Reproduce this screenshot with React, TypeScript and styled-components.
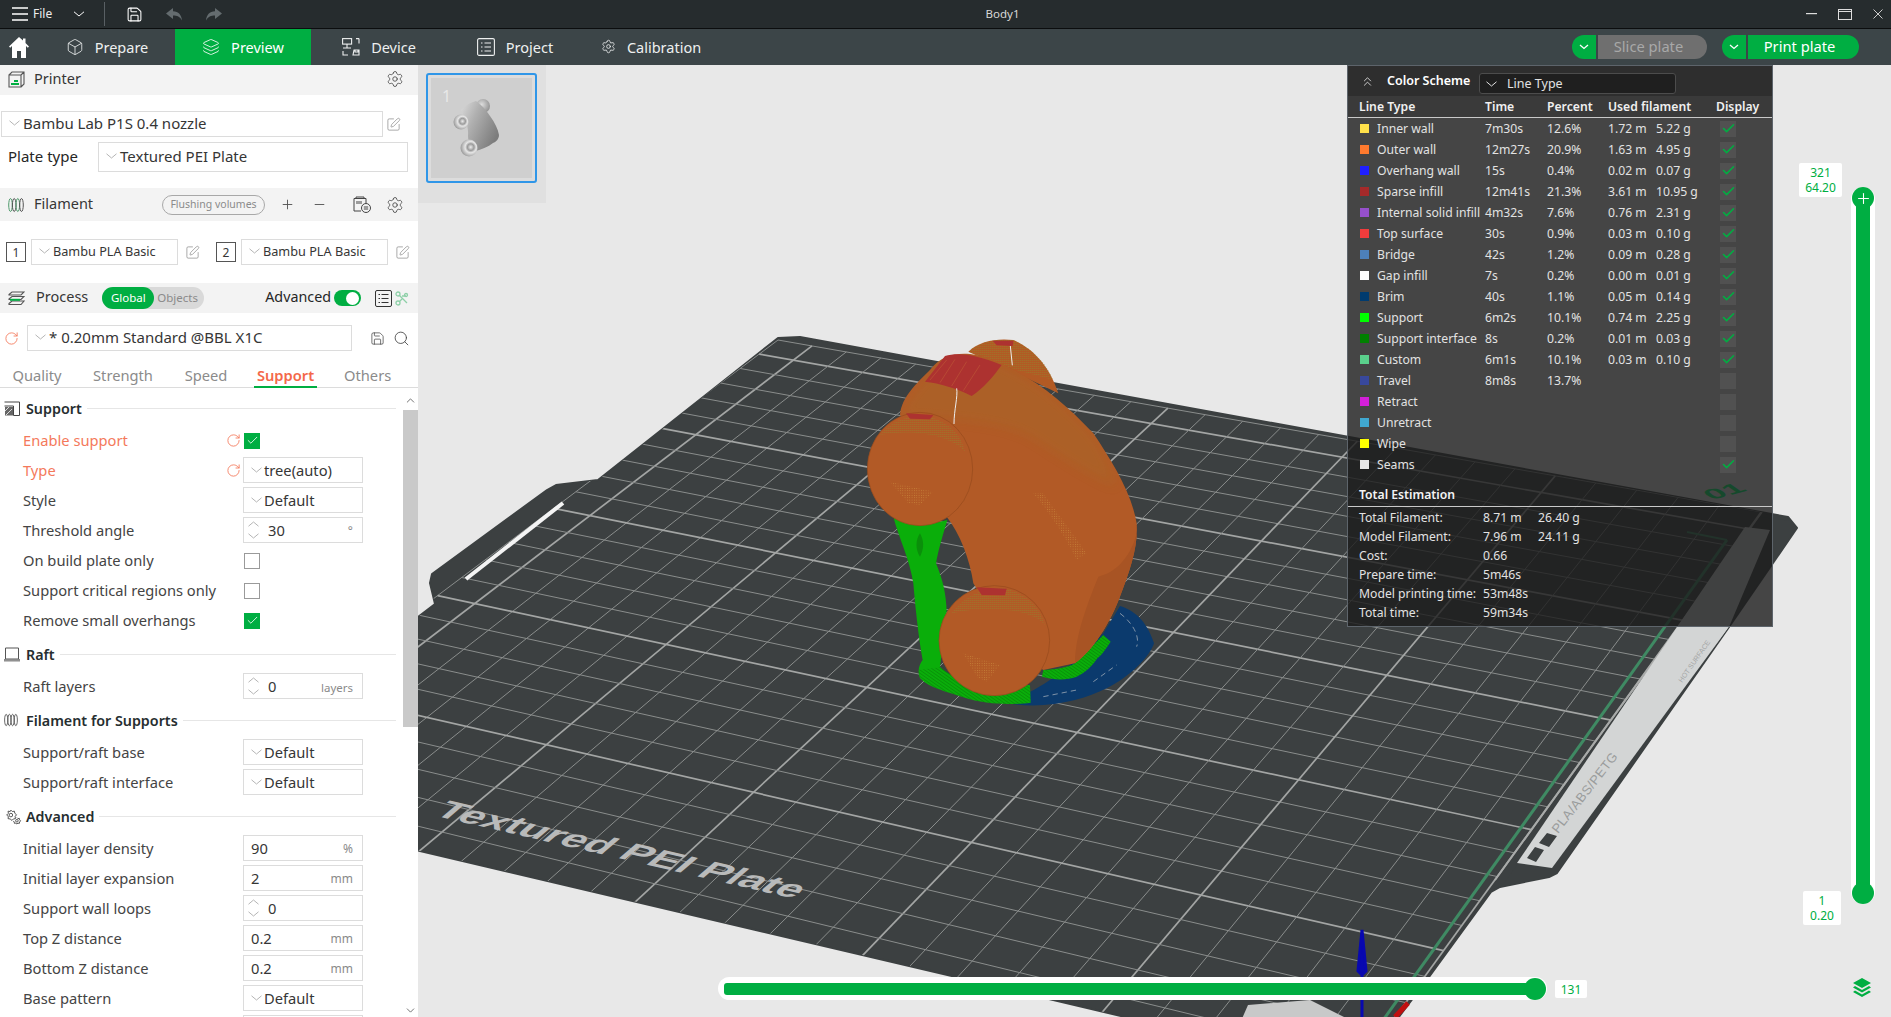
import React from "react";
import styled, { createGlobalStyle } from "styled-components";
import { Box, Layers, Settings, Plus, Minus, Search, Save, RotateCw, SquarePen, Check, ChevronsUp, ChevronUp, ChevronDown } from "lucide-react";

const GREEN = "#00ae42";
const FONT = `"Noto Sans", "Open Sans", Arial, sans-serif`;

const GlobalStyle = createGlobalStyle`
  html, body { margin: 0; padding: 0; width: 100%; height: 100%; overflow: hidden; background: #e8e8e8; }
  #root { width: 1891px; height: 1017px; }
  * { box-sizing: border-box; }
`;

const Shell = styled.div`
  width: 1891px; height: 1017px; display: flex; flex-direction: column; overflow: hidden;
  font-family: ${FONT}; color: #363636; font-size: 14px;
`;

/* ---------- title bar ---------- */
const TitleBar = styled.header`
  height: 29px; flex: none; background: #262c2e; border-bottom: 1px solid #0b0d0e;
  display: grid; grid-template-columns: 1fr auto 1fr; align-items: center; color: #fff;
`;
const TitleLeft = styled.div`display: flex; align-items: center; padding-left: 12px; height: 100%;`;
const FileLabel = styled.span`font-size: 12px; margin-left: 5px; width: 40px; color: #eee; padding-bottom: 1px;`;
const TitleDivider = styled.span`width: 1px; height: 24px; background: #596064; margin: 0 21px 0 19px;`;
const DocTitle = styled.div`font-size: 11.5px; color: #d8d8d8; padding-left: 114px; padding-bottom: 2px;`;
const WinControls = styled.div`display: flex; justify-content: flex-end; align-items: center; gap: 21px; padding-right: 8px;`;
const IconSlot = styled.span<{ $gap?: number }>`display: inline-flex; margin-right: ${p => p.$gap ?? 0}px;`;
const Spacer = styled.span<{ $w: number }>`width: ${p => p.$w}px; flex: none;`;

/* ---------- nav bar ---------- */
const NavBar = styled.nav`height: 36px; flex: none; background: #3c4548; display: flex; align-items: center; color: #eef0f0;`;
const HomeSlot = styled.div`width: 39px; display: flex; padding-left: 9px;`;
const NavTab = styled.div<{ $active?: boolean }>`
  width: 136px; height: 100%; display: flex; align-items: center; justify-content: center; gap: 11px; padding-bottom: 1px;
  font-size: 14.5px; background: ${p => (p.$active ? GREEN : "transparent")}; color: ${p => (p.$active ? "#fff" : "#eef0f0")};
`;
const NavActions = styled.div`margin-left: auto; display: flex; align-items: center; padding-right: 32px;`;
const SplitCaret = styled.span`
  width: 24px; height: 24px; background: ${GREEN}; border-radius: 12px 0 0 12px; display: flex; align-items: center; justify-content: center; margin-right: 2px;
`;
const SplitBtn = styled.span<{ $w: number; $off?: boolean; $gap?: number }>`
  width: ${p => p.$w}px; height: 24px; border-radius: 0 12px 12px 0; display: flex; align-items: center; justify-content: center; padding: 0 8px 2px 0;
  font-size: 14.7px; background: ${p => (p.$off ? "#6f6f6f" : GREEN)}; color: ${p => (p.$off ? "#a8a8a8" : "#fff")};
  margin-right: ${p => p.$gap ?? 0}px;
`;

/* ---------- sidebar ---------- */
const Main = styled.div`flex: 1; display: flex; min-height: 0;`;
const Sidebar = styled.aside`width: 418px; flex: none; background: #fff; display: flex; flex-direction: column; overflow: hidden;`;
const PanelHeader = styled.div<{ $h: number; $pr?: number; $pb?: number }>`
  height: ${p => p.$h}px; flex: none; background: #f3f3f3; display: flex; align-items: center; padding: 0 ${p => p.$pr ?? 14}px ${p => p.$pb ?? 0}px 8px;
`;
const HeaderTitle = styled.span<{ $ml?: number; $pb?: number }>`font-size: 14.5px; color: #363636; margin-left: ${p => p.$ml ?? 9}px; padding-bottom: ${p => p.$pb ?? 3}px;`;
const HeaderRight = styled.div`margin-left: auto; display: flex; align-items: center;`;
const PrinterBody = styled.div`padding: 16px 10px 16px 1px; display: flex; flex-direction: column; gap: 5px;`;
const ComboLine = styled.div`display: flex; align-items: center; gap: 3px;`;
const Field = styled.div<{ $w?: number; $h?: number; $size?: number }>`
  width: ${p => (p.$w ? `${p.$w}px` : "auto")}; height: ${p => p.$h ?? 26}px; border: 1px solid #dcdcdc; background: #fff;
  display: flex; align-items: center; padding: 0 0 2px 7px; gap: 3px; font-size: ${p => p.$size ?? 15}px; color: #363636; flex: none; white-space: nowrap;
`;
const PlateLine = styled.div`display: flex; align-items: center; padding-left: 7px;`;
const PlateLabel = styled.span`width: 90px; font-size: 15px; color: #262626; padding-bottom: 3px;`;
const FilamentBody = styled.div`padding: 18px 0 18px 6px; display: flex; align-items: center;`;
const NumBox = styled.span`
  width: 20px; height: 20px; border: 1px solid #555; font-size: 12px; display: flex; align-items: center; justify-content: center; margin-right: 5px; flex: none;
`;
const Pill = styled.span`
  width: 103px; height: 20px; border: 1px solid #a8a8a8; border-radius: 10px; color: #8b8b8b; font-size: 10.5px; padding-bottom: 1px;
  display: flex; align-items: center; justify-content: center; margin-right: 15px;
`;
const Segment = styled.div`width: 102px; height: 22px; background: #d9d9d9; border-radius: 11px; display: flex; align-items: center; font-size: 11.5px; color: #8a8a8a; margin-left: 14px; margin-top: -1px;`;
const SegmentOn = styled.span`width: 52px; height: 22px; background: ${GREEN}; border-radius: 11px; color: #fff; display: flex; align-items: center; justify-content: center; margin-right: 3px;`;
const AdvancedLabel = styled.span`font-size: 14.3px; margin-right: 3px; color: #262626; padding-bottom: 3px;`;
const Toggle = styled.span`width: 27px; height: 16px; border-radius: 8px; background: ${GREEN}; display: flex; justify-content: flex-end; align-items: center; padding-right: 2px; margin-right: 14px;`;
const ToggleKnob = styled.span`width: 13px; height: 13px; border-radius: 50%; background: #fff;`;
const PresetLine = styled.div`padding: 12px 0 0 4px; display: flex; align-items: center; flex: none;`;
const TabsRow = styled.div`
  height: 37px; flex: none; border-bottom: 1px solid #dcdcdc; position: relative; display: flex; align-items: center; font-size: 14.7px; color: #8b8b8b;
`;
const SubTab = styled.span<{ $active?: boolean; $w: number; $ml?: number }>`
  width: ${p => p.$w}px; margin-left: ${p => p.$ml ?? 0}px; text-align: center; height: 100%; line-height: 48px; flex: none; position: relative;
  color: ${p => (p.$active ? "#f4684a" : "#8b8b8b")}; font-weight: ${p => (p.$active ? 600 : 400)};
  ${p => p.$active && `&::after { content: ""; position: absolute; left: 0; right: 0; bottom: -1px; height: 2px; background: ${GREEN}; }`}
`;
const SettingsArea = styled.div`flex: 1; display: flex; min-height: 0;`;
const SettingsList = styled.div`width: 402px; flex: none; padding-top: 1px; overflow: hidden;`;
const Scrollbar = styled.div`width: 16px; flex: none; padding-top: 6px; display: flex; flex-direction: column; align-items: center; background: #fff; color: #555; position: relative;`;
const ScrollThumb = styled.div`width: 15px; height: 317px; background: #c9c9c9; margin-top: 3px;`;
const ScrollEnd = styled.span`position: absolute; bottom: 0; line-height: 0;`;
const SectionHead = styled.div`height: 30px; margin: 4px 0 2px; display: flex; align-items: center; padding: 0 6px 0 4px;`;
const SectionIcon = styled.span`width: 22px; display: flex; flex: none;`;
const SectionTitle = styled.span`font-size: 14.3px; font-weight: 600; color: #262e30; white-space: nowrap; margin-right: 5px;`;
const SectionRule = styled.span`flex: 1; height: 1px; background: #e6e6e6;`;
const Row = styled.div`height: 30px; display: grid; grid-template-columns: 203px 17px 120px; padding-left: 23px; align-items: center;`;
const RowLabel = styled.span<{ $mod?: boolean }>`font-size: 14.7px; color: ${p => (p.$mod ? "#f4795b" : "#444")}; white-space: nowrap;`;
const ResetSlot = styled.span`display: flex;`;
const Control = styled.div`
  grid-column: 3; width: 120px; height: 26px; border: 1px solid #dcdcdc; display: flex; align-items: center; font-size: 14.7px; color: #363636; position: relative; padding-left: 7px;
`;
const ControlCombo = styled(Control)`gap: 2px;`;
const Spin = styled.span`display: flex; flex-direction: column; align-items: center; gap: 6px; width: 12px; margin: 0 9px 0 -4px;`;
const Unit = styled.span<{ $size?: number }>`position: absolute; right: 9px; bottom: 3px; font-size: ${p => p.$size ?? 11.5}px; color: #8a8a8a;`;
const Tick = styled.span<{ $on?: boolean }>`
  grid-column: 3; width: 16px; height: 16px; margin: 1px 0 0 1px; display: flex; align-items: center; justify-content: center;
  background: ${p => (p.$on ? GREEN : "#fff")}; border: 1px solid ${p => (p.$on ? GREEN : "#9a9a9a")};
`;

/* ---------- viewport overlays ---------- */
const Viewport = styled.main`flex: 1; position: relative; background: #e8e8e8; overflow: hidden;`;
const Canvas = styled.svg`position: absolute; left: 0; top: 0; width: 1473px; height: 952px;`;
const ThumbRail = styled.div`position: absolute; left: 0; top: 0; width: 128px; height: 138px; background: #e0e0e0; padding: 8px;`;
const ThumbCard = styled.div`width: 111px; height: 110px; border: 2px solid #2f96e8; border-radius: 3px; background: #cfcfcf; box-shadow: inset 0 0 0 3px #dcdcdc; line-height: 0;`;

const Legend = styled.section`
  position: absolute; left: 929px; top: 0; width: 426px; height: 562px; background: rgba(27, 27, 27, 0.8); border: 1px solid #5d646b; color: #e2e2e2; font-size: 12.2px;
`;
const LegendTop = styled.div`height: 30px; background: #2e2e2e; display: flex; align-items: center; padding-left: 12px; color: #fff;`;
const LegendTitle = styled.span`font-weight: 600; font-size: 12.5px; margin-left: 12px; width: 92px; padding-bottom: 1px;`;
const LegendCombo = styled.div`
  width: 197px; height: 21px; background: #1f1f1f; border: 1px solid #4c4c4c; border-radius: 3px; margin-top: 5px; display: flex; align-items: center; gap: 10px; padding-left: 6px; color: #e2e2e2; font-size: 12.5px;
`;
const LegendHead = styled.div`
  height: 21px; display: grid; grid-template-columns: 126px 62px 61px 108px 60px; padding-left: 11px; align-items: center; font-weight: 600; color: #f0f0f0; background: #3a3a3a;
`;
const Rule = styled.div<{ $mb?: number }>`height: 1px; background: #c9c9c9; margin-bottom: ${p => p.$mb ?? 0}px;`;
const LegendRow = styled.div`
  height: 21px; display: grid; grid-template-columns: 17px 108px 62px 61px 48px 64px 16px; padding-left: 12px; align-items: center; white-space: nowrap;
`;
const Swatch = styled.span<{ $c: string }>`width: 9px; height: 9px; background: ${p => p.$c};`;
const LegendCheck = styled.span`width: 16px; height: 16px; background: #515151; display: flex; align-items: center; justify-content: center; grid-column: 7;`;
const EstimateTitle = styled.div`height: 31px; padding: 11px 0 0 11px; font-weight: 600; color: #f4f4f4;`;
const EstimateRow = styled.div`height: 19px; display: grid; grid-template-columns: 124px 55px 1fr; padding-left: 11px; align-items: center; white-space: nowrap;`;

const Track = styled.div`position: absolute; background: #fff;`;
const VOuter = styled(Track)`left: 1433px; top: 122px; width: 24px; height: 717px; border-radius: 12px;`;
const VInner = styled.div`position: absolute; left: 5px; top: 10px; width: 14px; bottom: 10px; background: ${GREEN};`;
const Knob = styled.span<{ $pos: string }>`position: absolute; ${p => p.$pos}; width: 22px; height: 22px; border-radius: 50%; background: ${GREEN}; display: flex; align-items: center; justify-content: center;`;
const HOuter = styled(Track)`left: 300px; top: 912px; height: 23px; border-radius: 12px; width: 829px;`;
const HInner = styled.div`position: absolute; left: 6px; right: 12px; top: 6px; height: 12px; background: ${GREEN}; border-radius: 3px;`;
const Bubble = styled.div<{ $x: number; $y: number; $w: number; $h: number }>`
  position: absolute; left: ${p => p.$x}px; top: ${p => p.$y}px; width: ${p => p.$w}px; height: ${p => p.$h}px; background: #fff; color: ${GREEN}; font-size: 12px; line-height: 15px;
  display: flex; flex-direction: column; align-items: center; justify-content: center; border-radius: 2px;
`;
const LayerBtn = styled.span`position: absolute; left: 1435px; top: 913px; line-height: 0;`;

/* ---------- small drawings ---------- */
const Caret = ({ c = "#b5b5b5", w = 11 }: { c?: string; w?: number }) => (
  <svg width={w} height={6} viewBox="0 0 11 6" style={{ flex: "none" }}><path d="M.5.8 5.5 5 10.500.8" fill="none" stroke={c} strokeWidth="1" /></svg>
);
const CaretUp = () => (
  <svg width={11} height={6} viewBox="0 0 11 6" style={{ flex: "none" }}><path d="M.5 5.200 5.500 1 10.500 5.200" fill="none" stroke="#b5b5b5" strokeWidth="1" /></svg>
);
const Menu = () => <svg width="16" height="14" viewBox="0 0 16 14"><path d="M0 1h16M0 7h16M0 13h16" stroke="#fff" strokeWidth="1.4" /></svg>;
const Undo = ({ flip }: { flip?: boolean }) => (
  <svg width="17" height="13" viewBox="0 0 17 13" style={{ transform: flip ? "scaleX(-1)" : undefined }}>
    <path d="M7 0 0 5.500 7 11V7.500c4 0 7 1.200 9 5C15.500 7 12.500 3.500 7 3.300Z" fill="#646c6f" />
  </svg>
);
const Home = () => (
  <svg width="20" height="21" viewBox="0 0 20 21"><path d="M10 0 0 9.500l1.200 1.200L3 9v12h5v-7h4v7h5V9l1.800 1.700L20 9.500 16.500 6V1.500h-2.500v2Z" fill="#fff" /></svg>
);
const DeviceIcon = () => (
  <svg width="18" height="18" viewBox="0 0 18 18" fill="none" stroke="#eef0f0" strokeWidth="1.100">
    <rect x=".6" y=".6" width="9" height="5.500" /><path d="M5 6v4M1 10h8M1 13v4h5M17 .6h-3M17 .6v5M11 17h6v-5h-5zM13 12v2h3v-2" />
  </svg>
);
const ProjectIcon = () => (
  <svg width="18" height="18" viewBox="0 0 18 18" fill="none" stroke="#eef0f0" strokeWidth="1.100">
    <rect x=".6" y=".6" width="16.800" height="16.800" rx="1.500" /><path d="M4 5h1.500M7.500 5H14M4 9h1.500M7.500 9H14M4 13h1.500M7.500 13H14" />
  </svg>
);
const PrinterIcon = () => (
  <svg width="17" height="17" viewBox="0 0 17 17" fill="none" stroke="#555" strokeWidth="1.100">
    <path d="M1 4h12v12H1zM1 4l3-3h12v12l-3 3M13 4l3-3" /><path d="M3 12h8v2H3zM6 9h4v2H6z" fill={GREEN} stroke="none" />
  </svg>
);
const SpoolIcon = ({ c = "#4f9a6c", s = 16 }: { c?: string; s?: number }) => (
  <svg width={s} height={s} viewBox="0 0 16 16" fill="none" stroke={c} strokeWidth="1">
    <ellipse cx="2.500" cy="8" rx="1.800" ry="6.500" /><ellipse cx="6.200" cy="8" rx="1.800" ry="6.500" stroke="#555" /><ellipse cx="9.800" cy="8" rx="1.800" ry="6.500" /><ellipse cx="13.500" cy="8" rx="1.800" ry="6.500" stroke="#555" />
  </svg>
);
const ProcessIcon = () => (
  <svg width="17" height="15" viewBox="0 0 17 15" fill="none" stroke="#555" strokeWidth="1.100">
    <path d="M1 3.500 4 1h12l-3 3H1zM1 8l3-2.500h12l-3 3H1zM1 12.500 4 10h12l-3 3.500H1z" /><path d="M2 8.800h10" stroke={GREEN} strokeWidth="2" />
  </svg>
);
const ListIcon = () => (
  <svg width="17" height="17" viewBox="0 0 17 17" fill="none" stroke="#333" strokeWidth="1"><rect x=".5" y=".5" width="16" height="16" rx="1.500" /><path d="M3.500 4.500h1.500M6.500 4.500h7M3.500 8.500h1.500M6.500 8.500h7M3.500 12.500h1.500M6.500 12.500h7" /></svg>
);
const ScissorIcon = () => (
  <svg width="14" height="15" viewBox="0 0 14 15" fill="none" stroke="#8ed0a8" strokeWidth="1.300"><circle cx="3" cy="3" r="2" /><circle cx="3" cy="12" r="2" /><circle cx="11" cy="4" r="1.500" /><path d="M4.500 4.500 12 12M4.500 10.500 7 8M7 5h4" /></svg>
);
const FilamentTool = () => (
  <svg width="18" height="17" viewBox="0 0 18 17" fill="none" stroke="#444" strokeWidth="1"><path d="M1 15V2.500h12V7" /><path d="M1 2.500h12M3 1h8v1.500H3zM4 5v3M6 5v3M8 5v3" /><path d="M1 15h7" /><circle cx="13" cy="12" r="4.500" /><path d="M10.800 11h4.400M10.800 13h4.400" /></svg>
);
const SupportIcon = () => (
  <svg width="16" height="15" viewBox="0 0 16 15" fill="none" stroke="#444" strokeWidth="1"><path d="M.5 1h15v13.500h-6V5H.5" /><path d="M1 6h8v8.500H1z" fill="#666" stroke="none" /><path d="M1 10 5 6M2 14l6-6" stroke="#ddd" /></svg>
);
const RaftIcon = () => (
  <svg width="16" height="15" viewBox="0 0 16 15" fill="none" stroke="#555" strokeWidth="1"><path d="M1.500 1h13v11h-13z" /><path d="M0 12.500h16v1.500H0z" fill="#999" stroke="#888" /></svg>
);
const CogsIcon = () => (
  <svg width="18" height="17" viewBox="0 0 24 24" fill="none" stroke="#555" strokeWidth="1.400">
    <circle cx="9" cy="10" r="2.500" /><path d="M9 3l2 2 3-.5.500 3 2.500 2-2 2.500.500 3-3 .500-2 2-2.500-2-3-.500.500-3L3 10l2.500-2.500L5 4.500l3 .5z" />
    <circle cx="17.500" cy="18" r="1.800" /><path d="M17.500 13.500l1.500 1.500 2-.3.300 2 1.500 1.500-1.500 1.500-.3 2-2-.3-1.500 1.100-1.500-1.100-2 .3-.3-2-1.500-1.500" />
  </svg>
);
const Reset = () => <RotateCw size={15} color="#f4795b" strokeWidth={1.400} />;
const Edit = () => <SquarePen size={15} color="#8f8f8f" strokeWidth={1.200} />;
const Gear = () => <Settings size={18} color="#444" strokeWidth={1.100} />;
const WhiteCaret = () => <svg width="10" height="6" viewBox="0 0 10 6"><path d="M1 1 5 4.500 9 1" fill="none" stroke="#fff" strokeWidth="1.300" /></svg>;
const GreenTick = () => <Check size={15} color={GREEN} strokeWidth={2.500} />;

/* ---------- 3D plate drawing ---------- */
type P = [number, number];
const homography = (a: P, b: P, c: P, d: P) => {
  const [x0, y0] = a, [x1, y1] = b, [x2, y2] = c, [x3, y3] = d;
  const dx1 = x1 - x2, dx2 = x3 - x2, sx = x0 - x1 + x2 - x3, dy1 = y1 - y2, dy2 = y3 - y2, sy = y0 - y1 + y2 - y3;
  const den = dx1 * dy2 - dx2 * dy1;
  const g = (sx * dy2 - dx2 * sy) / den, h = (dx1 * sy - sx * dy1) / den;
  const A = x1 - x0 + g * x1, B = x3 - x0 + h * x3, D = y1 - y0 + g * y1, E = y3 - y0 + h * y3;
  return (u: number, v: number): P => {
    const w = g * u + h * v + 1;
    return [(A * u + B * v + x0) / w, (D * u + E * v + y0) / w];
  };
};
const map = homography([778, 340], [1762, 512], [1346, 1085], [172, 795]);
const CELLS = 26;
const gridLines = Array.from({ length: CELLS + 1 }).flatMap((_, i) => {
  const t = i / CELLS, major = i % 5 === 1;
  return [
    { a: map(t, 0), b: map(t, 1), major },
    { a: map(0, t), b: map(1, t), major },
  ];
});
const PLATE = "778,338 800,337 1788,517 1797,528 1729,627 1557,873 1549,877 1500,887 1491,892 1429,977 1389,1030 1180,1030 956,977 420,851 410,848 410,623 435,604 430,583 432,574 547,490 556,485 598,480";

const Plate = () => (
  <g>
    <clipPath id="plateClip"><polygon points={PLATE} /></clipPath>
    <polygon points={PLATE} fill="#3c4041" stroke="#3c4041" strokeWidth="2" strokeLinejoin="round" />
    <g clipPath="url(#plateClip)">
      {gridLines.map((l, i) => (
        <line key={i} x1={l.a[0]} y1={l.a[1]} x2={l.b[0]} y2={l.b[1]} stroke={l.major ? "#a3a5a4" : "#8a8d8c"} strokeWidth={l.major ? 1.700 : 1} />
      ))}
      <polygon points="1237,1030 1248,1005 1310,1000 1370,1030" fill="#c8c9c9" />
      <polygon points="1505,882 1760,517 1800,522 1729,627 1557,873 1549,877 1500,887" fill="#3c4041" />
      <line x1="1376" y1="1030" x2="1727" y2="540" stroke="#3f8a63" strokeWidth="3" />
      <line x1="1687" y1="532" x2="1727" y2="540" stroke="#3f8a63" strokeWidth="2" />
      <line x1="1495" y1="880" x2="1770" y2="500" stroke="#a8aaa9" strokeWidth="2" />
      <polygon points="1517,863 1552,868 1729,627 1770,530 1745,527" fill="#d3d5d5" />
      <text transform="translate(1558 834) rotate(-52)" fontFamily="'Liberation Sans', sans-serif" fontSize="13" fill="#9a9c9c" textLength="98">PLA/ABS/PETG</text>
      <text transform="translate(1682 683) rotate(-55)" fontFamily="'Liberation Sans', sans-serif" fontSize="7" fill="#a3a5a5">HOT SURFACE</text>
      <path d="M1527 858l8-11 9 3-8 12zM1539 843l8-10 10 3-8 11z" fill="#3c4041" />
      <text transform="matrix(.974 .225 -.66 .56 432 815)" fontFamily="'Liberation Sans', sans-serif" fontWeight="700" fontSize="38" fill="#b9baba" textLength="372" lengthAdjust="spacingAndGlyphs">Textured PEI Plate</text>
    </g>
    <line x1="466" y1="579" x2="563" y2="503" stroke="#f4f4f4" strokeWidth="4" />
    <text transform="matrix(.95 -.25 .5 .35 1712 500)" fontFamily="'Liberation Sans', sans-serif" fontWeight="700" fontSize="34" fill="#00ff70">01</text>
    <path d="M1362 1017V975l-4-4 4-41 4 41-4 4" fill="#0808b0" stroke="#0808b0" strokeWidth="3" />
    <path d="M1395 1017 1408 1003" stroke="#c01010" strokeWidth="5" />
  </g>
);

const BODY = "M210 285C215 230 260 190 300 150 330 110 370 98 420 102 470 108 515 130 560 155 640 195 720 265 790 340 850 430 905 520 920 610 925 680 900 750 870 830 840 910 790 990 735 1030L640 1050 560 1000 430 790C420 720 390 640 350 590L300 420Z";

const Model = () => (
  <g transform="translate(830 320) scale(.33333)">
    <defs>
      <clipPath id="bodyClip"><path d={BODY} /></clipPath>
      <filter id="soft" x="-20%" y="-20%" width="140%" height="140%"><feGaussianBlur stdDeviation="18" /></filter>
      <pattern id="dither" width="7" height="7" patternUnits="userSpaceOnUse"><rect width="2.500" height="2.500" fill="#d8a64a" opacity=".55" /></pattern>
      <pattern id="olive" width="6" height="6" patternUnits="userSpaceOnUse"><rect width="4" height="3" fill="#8f8a2e" opacity=".8" /></pattern>
      <pattern id="hatch" width="8" height="8" patternUnits="userSpaceOnUse" patternTransform="rotate(35)"><rect width="8" height="2" fill="#086a08" opacity=".55" /></pattern>
    </defs>
    <path d="M530 1150C600 1120 700 1070 820 940L870 858C910 870 950 900 972 970 960 1010 900 1070 830 1105 760 1140 650 1170 530 1150Z" fill="#0b3a6d" />
    <path d="M870 880c40 30 60 70 50 100M790 1085l70-50M640 1130l100-20" stroke="#7f93a8" strokeWidth="3" strokeDasharray="16 12" fill="none" />
    <path d="M190 590C230 610 300 615 352 600 340 640 325 690 318 730 335 770 350 820 350 880L330 1040C370 1080 450 1100 600 1095L602 1148C550 1155 470 1155 400 1132 350 1115 300 1105 270 1075 260 1050 270 1030 278 1020 265 950 255 850 250 790 240 720 205 650 190 590Z" fill="#0aae0a" />
    <path d="M264 1050 340 1040C370 1080 450 1100 600 1095L602 1148C550 1155 470 1155 400 1132 350 1115 300 1105 270 1075Z" fill="url(#hatch)" />
    <path d="M640 1050C680 1050 720 1040 735 1030L820 945 842 965C825 990 815 1005 802 1015 780 1050 750 1065 740 1070 710 1080 680 1082 636 1070Z" fill="#0aae0a" />
    <path d="M640 1050C680 1050 720 1040 735 1030L820 945 842 965C825 990 815 1005 802 1015 780 1050 750 1065 740 1070 710 1080 680 1082 636 1070Z" fill="url(#hatch)" />
    <path d="M270 640c10 20 15 40 0 70 -14-20 -14-50 0-70" fill="#0a8f0a" />
    <path d="M415 95C450 62 500 55 550 60 610 85 660 140 685 220L560 160Z" fill="#b25a24" />
    <path d="M415 95C450 62 500 55 550 60 610 85 650 130 670 180L560 150Z" fill="url(#olive)" opacity=".55" />
    <path d={BODY} fill="#b25a26" />
    <g clipPath="url(#bodyClip)">
      <path d="M210 290C240 210 300 170 340 115 420 100 500 120 560 155 650 205 740 280 800 360 830 410 850 460 860 500 780 470 680 400 600 350 500 300 350 295 210 290Z" fill="url(#olive)" opacity=".55" filter="url(#soft)" />
      <path d="M735 1030C735 960 760 880 805 770 850 760 900 720 920 640 925 700 900 760 870 830 840 910 790 990 735 1030Z" fill="#a85424" />
      <path d="M640 520C680 580 730 640 770 700L740 720C700 640 660 580 610 520Z" fill="url(#dither)" />
    </g>
    <path d="M285 185 345 108C380 98 430 100 515 135 490 170 460 205 425 228 380 205 330 190 285 185Z" fill="#ad3230" />
    <path d="M300 180 350 120M330 188 375 118M365 198 410 125M400 212 450 135" stroke="#c4643a" strokeWidth="2" opacity=".7" />
    <path d="M488 62 550 62 548 78 500 76Z" fill="#ad3230" />
    <path d="M372 312C372 270 384 230 380 205" stroke="#eeeeee" strokeWidth="3" fill="none" />
    <path d="M547 136 541 78" stroke="#eeeeee" strokeWidth="3" fill="none" />
    <ellipse cx="270" cy="447" rx="158" ry="170" fill="#b25a26" stroke="#964a1c" strokeWidth="2" />
    <path d="M150 345C190 295 240 285 300 290 360 310 395 345 405 395 360 345 250 325 150 345Z" fill="url(#olive)" opacity=".55" />
    <path d="M228 280 310 285 300 298 240 296Z" fill="#ad3230" />
    <path d="M180 485 310 515 270 555 235 550Z" fill="url(#dither)" />
    <ellipse cx="493" cy="962" rx="166" ry="165" fill="#b25a26" stroke="#964a1c" strokeWidth="2" />
    <path d="M365 880C400 830 460 800 520 805 590 820 630 860 645 915 600 865 470 855 365 880Z" fill="url(#olive)" opacity=".55" />
    <path d="M440 802 530 806 525 826 455 825Z" fill="#ad3230" />
    <path d="M400 1000 510 1035 470 1085 440 1070Z" fill="url(#dither)" />
  </g>
);

const ThumbModel = () => (
  <svg width="107" height="106" viewBox="0 0 107 106">
    <defs>
      <linearGradient id="tBody" x1="0" y1="0" x2="1" y2=".6">
        <stop offset="0" stopColor="#dcdcdc" /><stop offset=".4" stopColor="#b0b0b0" /><stop offset="1" stopColor="#7c7c7c" />
      </linearGradient>
      <radialGradient id="tWheel" cx=".6" cy=".45" r=".65">
        <stop offset="0" stopColor="#ededed" /><stop offset=".3" stopColor="#9a9a9a" /><stop offset=".5" stopColor="#e6e6e6" /><stop offset="1" stopColor="#8c8c8c" />
      </radialGradient>
      <radialGradient id="tTop" cx=".4" cy=".4" r=".7">
        <stop offset="0" stopColor="#dedede" /><stop offset="1" stopColor="#8a8a8a" />
      </radialGradient>
    </defs>
    <text x="14" y="27" fontFamily={FONT} fontSize="16" fill="#e8e8e8">1</text>
    <circle cx="55" cy="31" r="7" fill="url(#tTop)" />
    <path d="M33 35C38 30 43 27 48 26 56 32 60 38 62 41 67 48 70 54 71 60 71 64 68 67 65 68 60 72 54 74 48 76 44 72 40 68 40 61 41 53 37 42 33 35Z" fill="url(#tBody)" />
    <circle cx="33" cy="47" r="7.500" fill="url(#tWheel)" />
    <circle cx="41" cy="73" r="8.500" fill="url(#tWheel)" />
  </svg>
);

const Layers3 = () => (
  <svg width="18" height="19" viewBox="0 0 18 19" fill={GREEN}>
    <path d="M9 0 18 5 9 10 0 5ZM2 8 9 12 16 8 18 9.500 9 14.500 0 9.500ZM2 12.500 9 16.500 16 12.500 18 14 9 19 0 14Z" />
  </svg>
);

/* ---------- data ---------- */
const LINES = [
  ["#ffe14a", "Inner wall", "7m30s", "12.6%", "1.72 m", "5.22 g", 1],
  ["#ff7a2e", "Outer wall", "12m27s", "20.9%", "1.63 m", "4.95 g", 1],
  ["#1f1fff", "Overhang wall", "15s", "0.4%", "0.02 m", "0.07 g", 1],
  ["#a52a2a", "Sparse infill", "12m41s", "21.3%", "3.61 m", "10.95 g", 1],
  ["#9650cc", "Internal solid infill", "4m32s", "7.6%", "0.76 m", "2.31 g", 1],
  ["#f03c3c", "Top surface", "30s", "0.9%", "0.03 m", "0.10 g", 1],
  ["#4d80ba", "Bridge", "42s", "1.2%", "0.09 m", "0.28 g", 1],
  ["#ffffff", "Gap infill", "7s", "0.2%", "0.00 m", "0.01 g", 1],
  ["#003b6f", "Brim", "40s", "1.1%", "0.05 m", "0.14 g", 1],
  ["#00ff00", "Support", "6m2s", "10.1%", "0.74 m", "2.25 g", 1],
  ["#008000", "Support interface", "8s", "0.2%", "0.01 m", "0.03 g", 1],
  ["#5ad08c", "Custom", "6m1s", "10.1%", "0.03 m", "0.10 g", 1],
  ["#38489c", "Travel", "8m8s", "13.7%", "", "", 0],
  ["#d31fd8", "Retract", "", "", "", "", 0],
  ["#40a8d0", "Unretract", "", "", "", "", 0],
  ["#ffff00", "Wipe", "", "", "", "", 0],
  ["#e8e8e8", "Seams", "", "", "", "", 1],
] as const;

const ESTIMATE = [
  ["Total Filament:", "8.71 m", "26.40 g"],
  ["Model Filament:", "7.96 m", "24.11 g"],
  ["Cost:", "0.66", ""],
  ["Prepare time:", "5m46s", ""],
  ["Model printing time:", "53m48s", ""],
  ["Total time:", "59m34s", ""],
];

const ComboCtl = ({ v }: { v: string }) => (
  <ControlCombo><Caret /><span>{v}</span></ControlCombo>
);
const SpinCtl = ({ v, unit, unitSize }: { v: string; unit?: string; unitSize?: number }) => (
  <Control>
    <Spin><CaretUp /><Caret /></Spin>
    <span>{v}</span>
    {unit && <Unit $size={unitSize}>{unit}</Unit>}
  </Control>
);
const NumCtl = ({ v, unit }: { v: string; unit: string }) => (
  <Control><span>{v}</span><Unit $size={12}>{unit}</Unit></Control>
);
const SetRow = ({ label, mod, children }: { label: string; mod?: boolean; children: React.ReactNode }) => (
  <Row>
    <RowLabel $mod={mod}>{label}</RowLabel>
    <ResetSlot>{mod && <Reset />}</ResetSlot>
    {children}
  </Row>
);
const Section = ({ icon, title }: { icon: React.ReactNode; title: string }) => (
  <SectionHead><SectionIcon>{icon}</SectionIcon><SectionTitle>{title}</SectionTitle><SectionRule /></SectionHead>
);

export default function App() {
  return (
    <Shell>
      <GlobalStyle />
      <TitleBar>
        <TitleLeft>
          <Menu /><FileLabel>File</FileLabel>
          <Caret c="#fff" w={12} />
          <TitleDivider />
          <IconSlot $gap={23}><Save size={17} color="#fff" strokeWidth={1.500} /></IconSlot>
          <IconSlot $gap={22}><Undo /></IconSlot>
          <Undo flip />
        </TitleLeft>
        <DocTitle>Body1</DocTitle>
        <WinControls>
          <svg width="11" height="2"><rect width="11" height="1.200" fill="#ddd" /></svg>
          <svg width="14" height="11" viewBox="0 0 14 11" fill="none" stroke="#ddd"><rect x=".5" y=".5" width="13" height="10" /><path d="M0 2.500h14" /></svg>
          <svg width="10" height="10" viewBox="0 0 10 10" stroke="#ccc"><path d="M.5.5l9 9M9.500.5l-9 9" /></svg>
        </WinControls>
      </TitleBar>
      <NavBar>
        <HomeSlot><Home /></HomeSlot>
        <NavTab><Box size={18} strokeWidth={1.100} />Prepare</NavTab>
        <NavTab $active><Layers size={18} strokeWidth={1.100} />Preview</NavTab>
        <NavTab><DeviceIcon />Device</NavTab>
        <NavTab><ProjectIcon />Project</NavTab>
        <NavTab><Settings size={15} strokeWidth={1.300} />Calibration</NavTab>
        <NavActions>
          <SplitCaret><WhiteCaret /></SplitCaret>
          <SplitBtn $w={109} $off $gap={15}>Slice plate</SplitBtn>
          <SplitCaret><WhiteCaret /></SplitCaret>
          <SplitBtn $w={111}>Print plate</SplitBtn>
        </NavActions>
      </NavBar>
      <Main>
        <Sidebar>
          <PanelHeader $h={30} $pb={2}>
            <PrinterIcon /><HeaderTitle>Printer</HeaderTitle>
            <HeaderRight><Gear /></HeaderRight>
          </PanelHeader>
          <PrinterBody>
            <ComboLine>
              <Field $w={382}><Caret />Bambu Lab P1S 0.4 nozzle</Field>
              <Edit />
            </ComboLine>
            <PlateLine>
              <PlateLabel>Plate type</PlateLabel>
              <Field $w={310} $h={30}><Caret />Textured PEI Plate</Field>
            </PlateLine>
          </PrinterBody>
          <PanelHeader $h={33}>
            <SpoolIcon /><HeaderTitle $ml={10}>Filament</HeaderTitle>
            <HeaderRight>
              <Pill>Flushing volumes</Pill>
              <IconSlot $gap={17}><Plus size={15} color="#555" strokeWidth={1.500} /></IconSlot>
              <IconSlot $gap={26}><Minus size={15} color="#555" strokeWidth={1.500} /></IconSlot>
              <IconSlot $gap={15}><FilamentTool /></IconSlot>
              <Gear />
            </HeaderRight>
          </PanelHeader>
          <FilamentBody>
            <NumBox>1</NumBox>
            <Field $w={147} $size={12.700}><Caret />Bambu PLA Basic</Field>
            <IconSlot $gap={16}><Spacer $w={7} /><Edit /></IconSlot>
            <NumBox>2</NumBox>
            <Field $w={147} $size={12.700}><Caret />Bambu PLA Basic</Field>
            <IconSlot><Spacer $w={7} /><Edit /></IconSlot>
          </FilamentBody>
          <PanelHeader $h={30} $pr={9}>
            <ProcessIcon /><HeaderTitle $ml={11} $pb={5}>Process</HeaderTitle>
            <Segment><SegmentOn>Global</SegmentOn>Objects</Segment>
            <HeaderRight>
              <AdvancedLabel>Advanced</AdvancedLabel>
              <Toggle><ToggleKnob /></Toggle>
              <IconSlot $gap={3}><ListIcon /></IconSlot>
              <ScissorIcon />
            </HeaderRight>
          </PanelHeader>
          <PresetLine>
            <IconSlot $gap={8}><Reset /></IconSlot>
            <Field $w={325}><Caret />* 0.20mm Standard @BBL X1C</Field>
            <IconSlot $gap={8}><Spacer $w={18} /><Save size={15} color="#444" strokeWidth={1.200} /></IconSlot>
            <Search size={17} color="#444" strokeWidth={1.200} />
          </PresetLine>
          <TabsRow>
            <SubTab $w={50} $ml={12}>Quality</SubTab>
            <SubTab $w={62} $ml={30}>Strength</SubTab>
            <SubTab $w={44} $ml={30}>Speed</SubTab>
            <SubTab $w={63} $ml={26} $active>Support</SubTab>
            <SubTab $w={47} $ml={27}>Others</SubTab>
          </TabsRow>
          <SettingsArea>
            <SettingsList>
              <Section icon={<SupportIcon />} title="Support" />
              <SetRow label="Enable support" mod><Tick $on><Check size={13} color="#fff" strokeWidth={1.500} /></Tick></SetRow>
              <SetRow label="Type" mod><ComboCtl v="tree(auto)" /></SetRow>
              <SetRow label="Style"><ComboCtl v="Default" /></SetRow>
              <SetRow label="Threshold angle"><SpinCtl v="30" unit="°" unitSize={12} /></SetRow>
              <SetRow label="On build plate only"><Tick /></SetRow>
              <SetRow label="Support critical regions only"><Tick /></SetRow>
              <SetRow label="Remove small overhangs"><Tick $on><Check size={13} color="#fff" strokeWidth={1.500} /></Tick></SetRow>
              <Section icon={<RaftIcon />} title="Raft" />
              <SetRow label="Raft layers"><SpinCtl v="0" unit="layers" /></SetRow>
              <Section icon={<SpoolIcon c="#555" s={14} />} title="Filament for Supports" />
              <SetRow label="Support/raft base"><ComboCtl v="Default" /></SetRow>
              <SetRow label="Support/raft interface"><ComboCtl v="Default" /></SetRow>
              <Section icon={<CogsIcon />} title="Advanced" />
              <SetRow label="Initial layer density"><NumCtl v="90" unit="%" /></SetRow>
              <SetRow label="Initial layer expansion"><NumCtl v="2" unit="mm" /></SetRow>
              <SetRow label="Support wall loops"><SpinCtl v="0" /></SetRow>
              <SetRow label="Top Z distance"><NumCtl v="0.2" unit="mm" /></SetRow>
              <SetRow label="Bottom Z distance"><NumCtl v="0.2" unit="mm" /></SetRow>
              <SetRow label="Base pattern"><ComboCtl v="Default" /></SetRow>
              <SetRow label=""><ComboCtl v="" /></SetRow>
            </SettingsList>
            <Scrollbar>
              <ChevronUp size={13} strokeWidth={1.500} />
              <ScrollThumb />
              <ScrollEnd><ChevronDown size={13} strokeWidth={1.500} /></ScrollEnd>
            </Scrollbar>
          </SettingsArea>
        </Sidebar>
        <Viewport>
          <Canvas viewBox="418 65 1473 952">
            <Plate />
            <Model />
          </Canvas>
          <ThumbRail><ThumbCard><ThumbModel /></ThumbCard></ThumbRail>
          <Legend>
            <LegendTop>
              <ChevronsUp size={15} strokeWidth={1.200} />
              <LegendTitle>Color Scheme</LegendTitle>
              <LegendCombo><Caret c="#e2e2e2" />Line Type</LegendCombo>
            </LegendTop>
            <LegendHead><span>Line Type</span><span>Time</span><span>Percent</span><span>Used filament</span><span>Display</span></LegendHead>
            <Rule />
            {LINES.map(r => (
              <LegendRow key={r[1]}>
                <Swatch $c={r[0]} /><span>{r[1]}</span><span>{r[2]}</span><span>{r[3]}</span><span>{r[4]}</span><span>{r[5]}</span>
                <LegendCheck>{r[6] ? <GreenTick /> : null}</LegendCheck>
              </LegendRow>
            ))}
            <EstimateTitle>Total Estimation</EstimateTitle>
            <Rule $mb={1} />
            {ESTIMATE.map(r => (
              <EstimateRow key={r[0]}><span>{r[0]}</span><span>{r[1]}</span><span>{r[2]}</span></EstimateRow>
            ))}
          </Legend>
          <VOuter>
            <VInner />
            <Knob $pos="left: 1px; top: 0"><Plus size={17} color="#fff" strokeWidth={1.500} /></Knob>
            <Knob $pos="left: 1px; bottom: 0" />
          </VOuter>
          <Bubble $x={1381} $y={98} $w={43} $h={34}><span>321</span><span>64.20</span></Bubble>
          <Bubble $x={1385} $y={826} $w={38} $h={34}><span>1</span><span>0.20</span></Bubble>
          <HOuter>
            <HInner />
            <Knob $pos="right: 1px; top: 1px" />
          </HOuter>
          <Bubble $x={1137} $y={915} $w={32} $h={18}><span>131</span></Bubble>
          <LayerBtn><Layers3 /></LayerBtn>
        </Viewport>
      </Main>
    </Shell>
  );
}
